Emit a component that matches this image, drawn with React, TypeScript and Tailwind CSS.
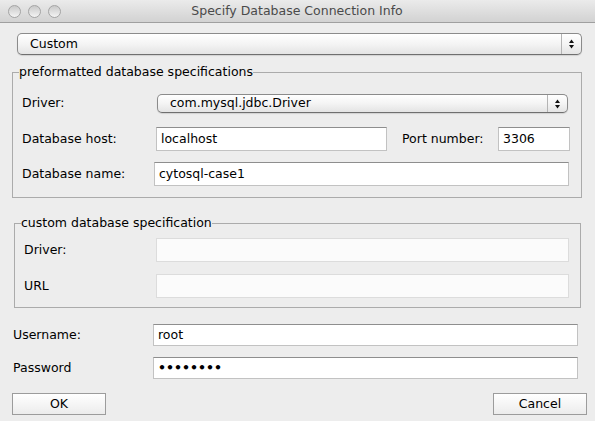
import type { ReactNode } from 'react';

const font = { fontFamily: '"DejaVu Sans", "Liberation Sans", sans-serif' };

function Arrows() {
  return (
    <svg width="7" height="12" viewBox="0 0 7 12" className="block">
      <path d="M3.5 1.5 L6 5 L1 5 Z" fill="#111" />
      <path d="M3.5 10.5 L6 7 L1 7 Z" fill="#111" />
    </svg>
  );
}

function Select({ value, className }: { value: string; className: string }) {
  return (
    <div
      className={`flex items-stretch rounded-[5px] border border-[#8b8b8b] border-b-[#6f6f6f] bg-gradient-to-b from-white via-[#f4f4f4] to-[#e4e4e4] shadow-[0_1px_1px_rgba(0,0,0,0.12)] ${className}`}
    >
      <div className="flex flex-1 items-center pl-[12px] leading-none">{value}</div>
      <div className="flex w-[20px] items-center justify-center border-l border-[#b4b4b4]">
        <Arrows />
      </div>
    </div>
  );
}

function Field({ value, className, disabled }: { value?: ReactNode; className: string; disabled?: boolean }) {
  return (
    <div
      className={`flex items-center border pl-[4px] leading-none ${
        disabled
          ? 'border-[#dcdcdc] bg-[#fbfbfb]'
          : 'border-[#c2c2c2] border-t-[#8e8e8e] bg-white'
      } ${className}`}
    >
      {value}
    </div>
  );
}

function Light() {
  return (
    <div className="h-[13px] w-[13px] rounded-full border border-[#a4a4a4] bg-gradient-to-b from-[#c9c9c9] to-[#f4f4f4]" />
  );
}

function Button({ label }: { label: string }) {
  return (
    <div className="flex h-[22px] w-[94px] items-center justify-center border border-[#9c9c9c] bg-gradient-to-b from-white to-[#ececec] leading-none">
      {label}
    </div>
  );
}

export default function App() {
  return (
    <div className="h-[421px] w-[595px] overflow-hidden bg-[#ededed] text-[12.5px] text-black" style={font}>
      {/* Title bar */}
      <div className="flex h-[23px] items-center border-b border-[#9f9f9f] bg-gradient-to-b from-[#ebebeb] to-[#d2d2d2]">
        <div className="flex gap-[7px] pl-[8px] pt-[1px]">
          <Light />
          <Light />
          <Light />
        </div>
        <div className="flex-1 pr-[62px] text-center text-[12.5px] text-[#4a4a4a]">Specify Database Connection Info</div>
      </div>

      {/* Mode select */}
      <Select value="Custom" className="ml-[17px] mt-[10px] h-[22px] w-[565px]" />

      {/* preformatted */}
      <fieldset className="ml-[12px] mt-[9px] h-[134px] w-[570px] border border-[#ababab]">
        <legend className="ml-[6px] p-0 leading-[16px]">preformatted database specifications</legend>
        <div className="mt-[14px] flex items-center pl-[9px]">
          <div className="w-[135px]">Driver:</div>
          <Select value="com.mysql.jdbc.Driver" className="h-[19px] w-[411px]" />
        </div>
        <div className="mt-[14px] flex items-center pl-[9px]">
          <div className="w-[134px]">Database host:</div>
          <Field value="localhost" className="h-[24px] w-[231px]" />
          <div className="w-[111px] pl-[15px]">Port number:</div>
          <Field value="3306" className="h-[24px] w-[72px]" />
        </div>
        <div className="mt-[11px] flex items-center pl-[9px]">
          <div className="w-[132px]">Database name:</div>
          <Field value="cytosql-case1" className="h-[24px] w-[415px]" />
        </div>
      </fieldset>

      {/* custom */}
      <fieldset className="ml-[14px] mt-[17px] h-[93px] w-[567px] border border-[#ababab]">
        <legend className="ml-[6px] p-0 leading-[16px]">custom database specification</legend>
        <div className="mt-[7px] flex items-center pl-[9px]">
          <div className="w-[132px]">Driver:</div>
          <Field disabled className="h-[24px] w-[413px]" />
        </div>
        <div className="mt-[12px] flex items-center pl-[9px]">
          <div className="w-[132px]">URL</div>
          <Field disabled className="h-[24px] w-[413px]" />
        </div>
      </fieldset>

      {/* credentials */}
      <div className="mt-[16px] flex items-center pl-[13px]">
        <div className="w-[140px]">Username:</div>
        <Field value="root" className="h-[22px] w-[425px]" />
      </div>
      <div className="mt-[11px] flex items-center pl-[13px]">
        <div className="w-[140px]">Password</div>
        <Field
          value={<span className="text-[12.5px] font-bold">••••••••</span>}
          className="h-[22px] w-[425px]"
        />
      </div>

      {/* buttons */}
      <div className="mt-[14px] flex items-center justify-between pl-[12px] pr-[8px]">
        <Button label="OK" />
        <Button label="Cancel" />
      </div>
    </div>
  );
}
